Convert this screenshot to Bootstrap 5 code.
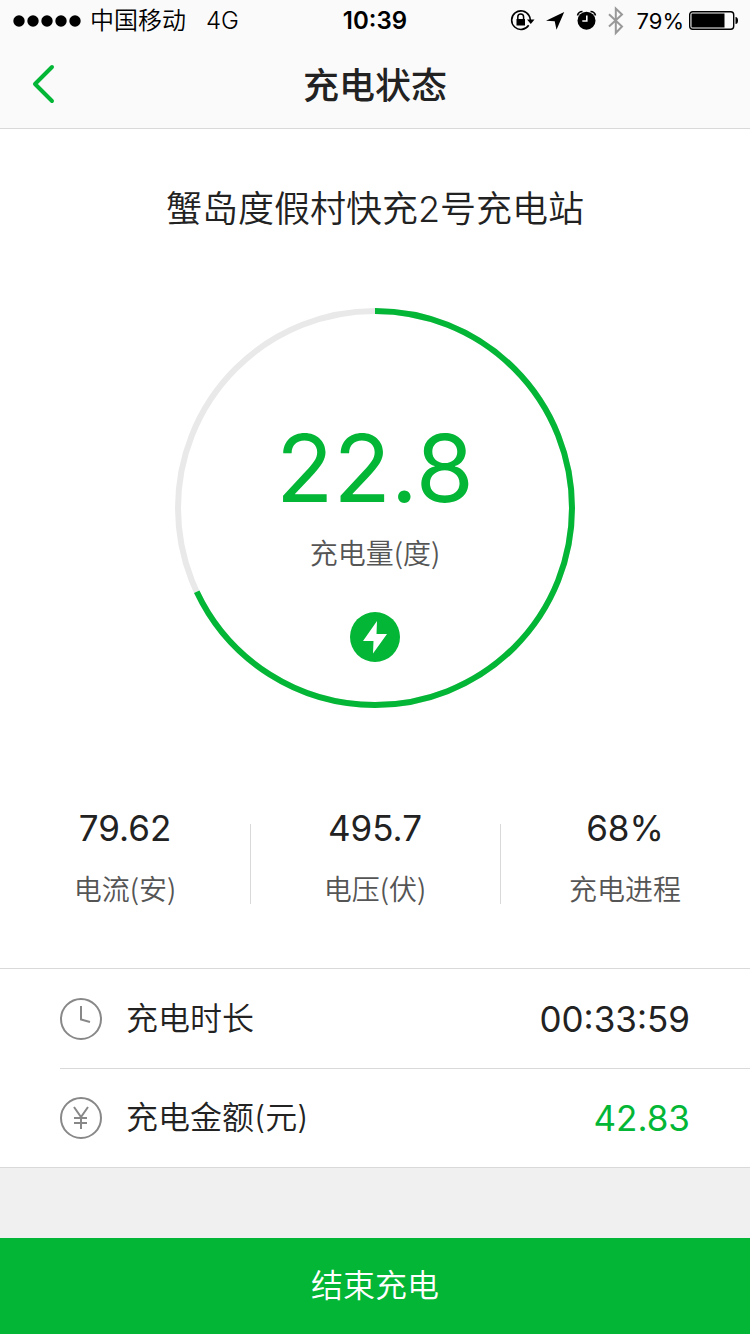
<!DOCTYPE html>
<html lang="zh-CN">
<head>
<meta charset="utf-8">
<meta name="viewport" content="width=device-width, initial-scale=1">
<title>充电状态</title>
<link href="https://cdn.jsdelivr.net/npm/bootstrap@5.3.0/dist/css/bootstrap.min.css" rel="stylesheet">
<style>
  :root { --brand: #03b636; --ink: #222; --muted: #555; --line: #d9d9d9; }
  body { font-family: Inter, "Noto Sans CJK SC", sans-serif; color: var(--ink); background: #f0f0f0; line-height: 1; }
  svg { display: block; flex: none; }
  .top-area { background: #fafafa; border-bottom: 1px solid var(--line); }
  .status-bar { height: 40px; padding: 2px 12px 0; font-size: 24px; color: #000; display: grid; grid-template-columns: 1fr auto 1fr; align-items: center; }
  .carrier { gap: 20px; font-weight: 350; }
  .battery-text { font-size: 22px; }
  .clock-text { font-weight: 600; }
  .title-bar { height: 88px; display: grid; grid-template-columns: 88px 1fr 88px; align-items: center; }
  .back-link { padding: 20px 32px; }
  .page-title { font-size: 36px; font-weight: 500; padding-top: 6px; }
  .station { font-size: 36px; font-weight: 350; line-height: 56px; padding-top: 52px; margin-bottom: 71px; }
  .ring { width: 400px; height: 400px; padding-top: 112px; }
  .ring-art { inset: 0; }
  .brand-text { color: var(--brand); }
  .energy { font-size: 94px; line-height: 96px; }
  .bolt-icon { margin-top: 40px; }
  .caption { font-family: "Noto Sans CJK SC", sans-serif; font-size: 28px; font-weight: 350; line-height: 40px; color: var(--muted); }
  .figure-text { font-size: 35px; line-height: 44px; }
  .stats { padding-top: 98px; padding-bottom: 60px; }
  .stat { position: relative; display: grid; gap: 18px; }
  .stat + .stat::before { content: ""; position: absolute; left: 0; top: 18px; bottom: 4px; width: 1px; background: var(--line); }
  .details { border-top: 1px solid var(--line); border-bottom: 1px solid var(--line); padding-left: 60px; }
  .detail { height: 99px; padding-right: 60px; }
  .detail + .detail { border-top: 1px solid var(--line); }
  .detail-label { font-size: 32px; font-weight: 350; }
  .stop-btn { height: 96px; font-size: 32px; font-weight: 350; --bs-btn-bg: var(--brand); --bs-btn-color: #fff; --bs-btn-hover-bg: #029c2e; --bs-btn-hover-color: #fff; --bs-btn-active-bg: #02902a; }
</style>
</head>
<body class="d-flex flex-column min-vh-100">
<header class="top-area">
  <div class="status-bar">
    <div class="d-flex align-items-center">
      <svg width="70" height="14" viewBox="0 0 70 14" aria-hidden="true"><circle cx="7" cy="7" r="5.700"/><circle cx="21" cy="7" r="5.700"/><circle cx="35" cy="7" r="5.700"/><circle cx="49" cy="7" r="5.700"/><circle cx="63" cy="7" r="5.700"/></svg>
      <div class="carrier d-flex ms-2"><span>中国移动</span><span>4G</span></div>
    </div>
    <span class="clock-text">10:39</span>
    <div class="d-flex align-items-center justify-content-end">
      <svg class="me-1" width="126" height="32" viewBox="0 0 126 32" aria-hidden="true">
        <g fill="none" stroke="#000" stroke-width="1.600"><path d="M21.700 20.300A9.300 9.300 0 1 1 22 10.500Q23.300 12.500 23.300 15"/><path d="M10.800 14.500v-2.500a2.900 2.900 0 0 1 5.800 0V14.500" stroke-width="1.500"/></g>
        <path d="M9.500 14h8.500v6.500h-8.500zM20 14.500h7.500l-3.700 4.500z"/>
        <path d="M39 15.700L57.200 7 49.500 24.800 47.700 16.300z"/>
        <circle cx="79.500" cy="15.700" r="9"/>
        <path d="M70.500 10.500q1-4 5-4M83.500 6.500q4 0 5 4" fill="none" stroke="#000" stroke-width="1.600"/>
        <path d="M79.800 10.500v5.500h-4.500" fill="none" stroke="#fafafa" stroke-width="1.600"/>
        <path d="M102 9.200l13 12.300-6.200 6.500V3.500l6.200 6-13 12" fill="none" stroke="#999" stroke-width="2"/>
      </svg>
      <span class="battery-text">79%</span>
      <svg class="ms-1" width="50" height="20" viewBox="0 0 50 20" aria-hidden="true"><rect x="1.700" y=".7" width="44" height="17.600" rx="3" fill="none" stroke="#000" stroke-width="1.400"/><path d="M3.500 2.500h33v14h-33zM47.500 6q2.500 0 2.500 3.500t-2.500 3.500z"/></svg>
    </div>
  </div>
  <nav class="title-bar" aria-label="页面导航">
    <a class="back-link" href="#" aria-label="返回"><svg width="24" height="40" viewBox="0 0 24 40" fill="none" stroke="#03b636" stroke-width="4" stroke-linecap="round" stroke-linejoin="round"><path d="M20 3L3 20 20 37"/></svg></a>
    <h1 class="page-title text-center m-0">充电状态</h1>
  </nav>
</header>
<main class="bg-white text-center">
  <h2 class="station">蟹岛度假村快充2号充电站</h2>
  <section class="ring position-relative mx-auto d-flex flex-column align-items-center">
    <svg class="ring-art position-absolute" width="400" height="400" viewBox="0 0 400 400" fill="none" stroke-width="6" aria-hidden="true">
      <circle cx="200" cy="200" r="197" stroke="#e9e9e9"/>
      <circle cx="200" cy="200" r="197" stroke="#03b636" pathLength="100" stroke-dasharray="68 32" transform="rotate(-90 200 200)"/>
    </svg>
    <div class="energy brand-text">22.8</div>
    <div class="caption mt-3">充电量(度)</div>
    <svg class="bolt-icon" width="50" height="50" viewBox="0 0 50 50" aria-hidden="true"><circle cx="25" cy="25" r="25" fill="#03b636"/><path d="M27 9L13 29h10.500L23 41.500 37 22H26.500z" fill="#fff"/></svg>
  </section>
  <section class="stats row g-0">
    <div class="stat col"><div class="figure-text">79.62</div><div class="caption">电流(安)</div></div>
    <div class="stat col"><div class="figure-text">495.7</div><div class="caption">电压(伏)</div></div>
    <div class="stat col"><div class="figure-text">68%</div><div class="caption">充电进程</div></div>
  </section>
  <ul class="details list-unstyled m-0">
    <li class="detail d-flex align-items-center">
      <svg width="42" height="42" viewBox="0 0 42 42" fill="none" stroke="#888" stroke-width="2" aria-hidden="true"><circle cx="21" cy="21" r="20"/><path d="M21 8v13.500l9 2.500"/></svg>
      <span class="detail-label ms-4">充电时长</span><span class="figure-text ms-auto">00:33:59</span>
    </li>
    <li class="detail d-flex align-items-center">
      <svg width="42" height="42" viewBox="0 0 42 42" fill="none" stroke="#888" stroke-width="2" aria-hidden="true"><circle cx="21" cy="21" r="20"/><path d="M14 10l7 10 7-10M21 20v12M14 21h13M14 26h13"/></svg>
      <span class="detail-label ms-4">充电金额(元)</span><span class="figure-text brand-text ms-auto">42.83</span>
    </li>
  </ul>
</main>
<footer class="mt-auto">
  <button type="button" class="stop-btn btn w-100 rounded-0 border-0">结束充电</button>
</footer>
<script src="https://cdn.jsdelivr.net/npm/bootstrap@5.3.0/dist/js/bootstrap.bundle.min.js"></script>
</body>
</html>
